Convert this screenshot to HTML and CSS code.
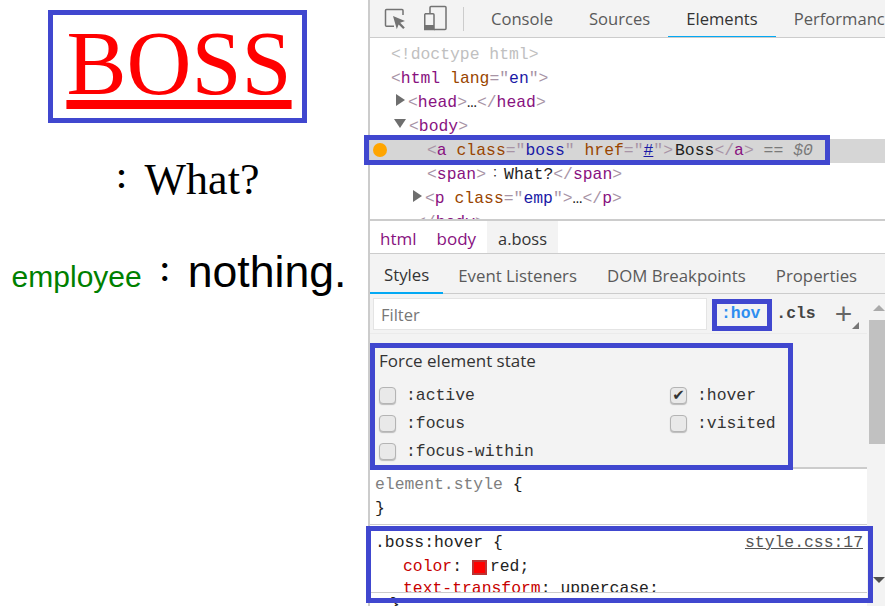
FILE: index.html
```html
<!DOCTYPE html>
<html lang="en">
<head>
<meta charset="utf-8">
<title>Boss</title>
<link rel="stylesheet" href="styles.css">
</head>
<body>
<div class="app">
  <main class="page">
    <a class="boss" href="#">BOSS</a>
    <span class="what"><span class="colon">：</span>What?</span>
    <p class="emp"><span class="emp-name">employee</span><span class="emp-text"><span class="colon">：</span>nothing.</span></p>
  </main>
  <section class="devtools">
    <header class="toolbar">
      <svg class="tool-icon inspect" width="24" height="24" viewBox="0 0 24 24"><path d="M11 20.200H3.500a1 1 0 0 1-1-1V4.500a1 1 0 0 1 1-1H19a1 1 0 0 1 1 1V9" fill="none" stroke="#737373" stroke-width="1.500"/><path d="M10 10l12 5-4.800 1.800 4.600 4.600-1.600 1.600-4.600-4.600-1.800 4.800z" fill="#737373"/></svg>
      <svg class="tool-icon device" width="24" height="26" viewBox="0 0 24 26"><path d="M7 8V2.500a1 1 0 0 1 1-1h14a1 1 0 0 1 1 1v21a1 1 0 0 1-1 1H11" fill="none" stroke="#737373" stroke-width="1.500"/><path d="M2 8.750h8a1 1 0 0 1 1 1v14.750H1.750V9.750a1 1 0 0 1 1-1z" fill="none" stroke="#737373" stroke-width="1.500"/><path d="M1 20h10v5H1z" fill="#737373"/></svg>
      <span class="tool-sep"></span>
      <span class="tab">Console</span>
      <span class="tab">Sources</span>
      <span class="tab active">Elements</span>
      <span class="tab">Performance</span>
    </header>
    <div class="tree">
      <div class="row ind1 doctype">&lt;!doctype html&gt;</div>
      <div class="row ind1"><i>&lt;</i><b>html</b> <u>lang</u><i>="</i><em>en</em><i>"&gt;</i></div>
      <div class="row ind2"><span class="tri right"></span><i>&lt;</i><b>head</b><i>&gt;</i><s>…</s><i>&lt;/</i><b>head</b><i>&gt;</i></div>
      <div class="row ind2"><span class="tri down"></span><i>&lt;</i><b>body</b><i>&gt;</i></div>
      <div class="row ind3 selected"><span class="dot"></span><i>&lt;</i><b>a</b> <u>class</u><i>="</i><em>boss</em><i>"</i> <u>href</u><i>="</i><em class="link">#</em><i>"&gt;</i><s class="boss-text">Boss</s><i>&lt;/</i><b>a</b><i>&gt;</i> <span class="eq">== <span class="var">$0</span></span></div>
      <div class="row ind3"><i>&lt;</i><b>span</b><i>&gt;</i><s class="cjk">：</s><s>What?</s><i>&lt;/</i><b>span</b><i>&gt;</i></div>
      <div class="row ind4"><span class="tri right"></span><i>&lt;</i><b>p</b> <u>class</u><i>="</i><em>emp</em><i>"&gt;</i><s>…</s><i>&lt;/</i><b>p</b><i>&gt;</i></div>
      <div class="row ind2b"><i>&lt;/</i><b>body</b><i>&gt;</i></div>
    </div>
    <nav class="crumbs">
      <span class="crumb">html</span>
      <span class="crumb">body</span>
      <span class="crumb current">a.boss</span>
    </nav>
    <nav class="subtabs">
      <span class="subtab active">Styles</span>
      <span class="subtab">Event Listeners</span>
      <span class="subtab">DOM Breakpoints</span>
      <span class="subtab">Properties</span>
    </nav>
    <div class="styles">
      <div class="styles-main">
        <div class="filterbar">
          <span class="filter">Filter</span>
          <span class="hov">:hov</span>
          <span class="cls">.cls</span>
          <span class="plus">+</span>
          <span class="corner"></span>
        </div>
        <div class="force">
          <div class="force-title">Force element state</div>
          <div class="force-grid">
            <label class="state"><span class="check"></span>:active</label>
            <label class="state"><span class="check on">✔</span>:hover</label>
            <label class="state"><span class="check"></span>:focus</label>
            <label class="state"><span class="check"></span>:visited</label>
            <label class="state"><span class="check"></span>:focus-within</label>
          </div>
        </div>
        <div class="rule first">
          <div class="css muted">element.style <span class="brace">{</span></div>
          <div class="css">}</div>
        </div>
        <div class="rule second">
          <div class="css selector"><span>.boss:hover {</span><span class="source">style.css:17</span></div>
          <div class="css prop"><span class="name">color</span>: <span class="swatch"></span>red;</div>
          <div class="css prop"><span class="name">text-transform</span>: uppercase;</div>
        </div>
        <div class="rule third"><div class="css">}</div></div>
      </div>
      <div class="scrollbar">
        <span class="arrow up"></span>
        <span class="thumb"></span>
        <span class="track"></span>
        <span class="arrow down"></span>
      </div>
    </div>
  </section>
</div>
<div class="mark mark-page"></div>
<div class="mark mark-row"></div>
<div class="mark mark-hov"></div>
<div class="mark mark-force"></div>
<div class="mark mark-rule"></div>
</body>
</html>
```
FILE: styles.css
```css
* { box-sizing: border-box; }
html, body { margin: 0; height: 100%; overflow: hidden; background: #fff; }
.app { display: flex; width: 885px; height: 606px; overflow: hidden; }

.page { width: 368px; flex: none; display: flex; flex-direction: column; align-items: center; padding-top: 14px; padding-right: 10px; }
.boss { font: 90px/100px "Liberation Serif", "Times New Roman", serif; color: #f00; text-decoration: underline; text-decoration-thickness: 9px; text-underline-offset: 6px; text-decoration-skip-ink: none; }
.what { margin-top: 38px; font: 44px/56px "Liberation Serif", serif; color: #000; }
.colon { display: inline-block; width: 46px; text-align: center; font-family: "Noto Sans CJK TC", sans-serif; font-size: 27px; font-weight: 700; line-height: 1; vertical-align: 5px; }
.emp { margin: 36px 0 0; white-space: nowrap; display: flex; align-items: baseline; }
.emp-name { font: 30px/40px "Liberation Sans", Arial, sans-serif; color: #008000; }
.emp-text { font: 44.6px/56px "Liberation Sans", sans-serif; color: #000; }

.devtools { flex: 1; min-width: 0; display: flex; flex-direction: column; border-left: 2px solid #ccc; font-family: "Open Sans", "Noto Sans", sans-serif; overflow: hidden; }

.toolbar { height: 38px; flex: none; display: flex; align-items: center; background: #f3f3f3; border-bottom: 1px solid #ccc; white-space: nowrap; overflow: hidden; }
.tool-icon { flex: none; align-self: flex-start; }
.tool-icon.inspect { margin: 6px 0 0 13px; }
.tool-icon.device { margin: 5px 0 0 16px; }
.tool-sep { width: 1px; height: 24px; background: #ccc; margin: 0 9px 0 16px; flex: none; }
.tab { height: 38px; padding: 0 18px; font-size: 16.6px; line-height: 38px; color: #5a5a5a; flex: none; }
.tab.active { color: #333; border-bottom: 2px solid #03a9f4; line-height: 38px; }

.tree { height: 181px; flex: none; overflow: hidden; font: 16.4px/24px "Liberation Mono", monospace; padding-top: 5px; background: #fff; }
.row { height: 24px; white-space: pre; color: #222; position: relative; line-height: 23px; }
.row i { font-style: normal; color: #a894a6; }
.row b { font-weight: normal; color: #881280; }
.row u { text-decoration: none; color: #994500; }
.row em { font-style: normal; color: #1a1aa6; }
.row s { text-decoration: none; color: #222; }
.row .link { color: #1a1aa6; text-decoration: underline; }
.row .boss-text { margin-left: 2px; }
.doctype { color: #c0c0c0; }
.ind1 { padding-left: 21px; }
.ind2 { padding-left: 26px; }
.ind2b { padding-left: 46px; }
.ind3 { padding-left: 57px; }
.ind4 { padding-left: 43px; }
.selected { background: #d6d6d6; }
.row .cjk { display: inline-block; width: 18px; text-align: center; font-family: "Noto Sans CJK TC", sans-serif; font-size: 11px; line-height: 1; vertical-align: 2px; }
.eq { color: #7a7a7a; }
.var { font-style: italic; }
.tri { display: inline-block; width: 0; height: 0; margin-right: 3px; }
.tri.right { border-left: 9px solid #6e6e6e; border-top: 6px solid transparent; border-bottom: 6px solid transparent; vertical-align: 1px; }
.tri.down { border-top: 9px solid #6e6e6e; border-left: 6px solid transparent; border-right: 6px solid transparent; margin-left: -2px; vertical-align: 3px; }
.dot { position: absolute; left: 3px; top: 4px; width: 14px; height: 14px; border-radius: 50%; background: #ffa500; }

.crumbs { height: 35px; flex: none; display: flex; border-top: 2px solid #ccc; border-bottom: 1px solid #ccc; background: #fff; font-size: 17px; }
.crumb { padding: 0 10px; line-height: 35px; color: #881280; }
.crumb.current { color: #333; background: #f3f3f3; padding: 0 11px; margin-left: 1px; font-size: 16.4px; }

.subtabs { height: 40px; flex: none; display: flex; background: #f3f3f3; border-bottom: 1px solid #ccc; font-size: 16.8px; white-space: nowrap; }
.subtab { padding: 0 15px; line-height: 43px; color: #5a5a5a; }
.subtab.active { color: #333; border-bottom: 2px solid #03a9f4; padding: 0 14px; margin-bottom: -1px; line-height: 42px; }

.styles { flex: 1; min-height: 0; display: flex; background: #fff; }
.styles-main { flex: 1; min-width: 0; display: flex; flex-direction: column; overflow: hidden; }
.filterbar { height: 40px; flex: none; display: flex; align-items: flex-start; background: #f3f3f3; position: relative; border-bottom: 1px solid #ebebeb; padding: 4px 0 0 3px; }
.filter { width: 334px; height: 32px; flex: none; background: #fff; border: 1px solid #e4e4e4; padding-left: 7px; font-size: 16.5px; line-height: 31px; color: #777; }
.hov { margin-left: 14px; font: bold 16.4px/32px "Liberation Mono", monospace; color: #2e8ef0; }
.cls { margin-left: 16px; font: bold 16.4px/32px "Liberation Mono", monospace; color: #444; }
.plus { margin-left: 19px; font: 30px/32px "Liberation Sans", sans-serif; color: #666; }
.corner { position: absolute; right: 8px; bottom: 4px; width: 0; height: 0; border-left: 7px solid transparent; border-bottom: 7px solid #777; }

.force { height: 135px; flex: none; padding: 16px 0 0 9px; background: #f3f3f3; border-bottom: 2px solid #ccc; font-size: 17px; }
.force-title { line-height: 22px; color: #333; }
.force-grid { display: grid; grid-template-columns: 291px 1fr; grid-auto-rows: 28px; margin-top: 9px; }
.state { display: flex; align-items: center; font: 16.4px "Liberation Mono", monospace; color: #333; white-space: nowrap; }
.check { width: 17px; height: 17px; flex: none; margin-right: 10px; background: #e9e9e9; border: 1px solid #b4b4b4; border-radius: 4px; box-shadow: 0 1px 1px #bbb; display: flex; align-items: center; justify-content: center; font: 15px/1 "DejaVu Sans", sans-serif; color: #333; }

.rule { flex: none; border-bottom: 1px solid #ccc; font: 16.4px/24px "Liberation Mono", monospace; color: #222; }
.rule.first { height: 56px; padding: 4px 0 0 5px; }
.muted { color: #808080; }
.brace { color: #222; }
.rule.second { height: 68px; padding: 6px 4px 0 5px; overflow: hidden; }
.selector { display: flex; justify-content: space-between; }
.source { color: #555; text-decoration: underline; }
.prop { padding-left: 28px; display: flex; align-items: center; white-space: pre; }
.prop + .prop { margin-top: -2px; }
.name { color: #c80000; }
.swatch { width: 15px; height: 15px; flex: none; background: #f00; border: 2px solid #b33; margin: 0 3px 0 0; }
.rule.third { border-bottom: 0; padding: 0 0 0 20px; }

.scrollbar { width: 18px; flex: none; display: flex; flex-direction: column; align-items: flex-end; background: #f3f3f3; }
.thumb { width: 16px; height: 124px; flex: none; background: #c1c1c1; margin-top: 9px; }
.track { flex: 1; }
.arrow { width: 0; height: 0; flex: none; border-left: 6px solid transparent; border-right: 6px solid transparent; }
.arrow.up { border-bottom: 6px solid #aaa; margin-top: 11px; }
.arrow.down { border-top: 6px solid #505050; margin-bottom: 23px; }

.mark { position: absolute; border: 5px solid #4047cf; pointer-events: none; }
.mark-page { left: 48px; top: 10px; width: 259px; height: 113px; }
.mark-row { left: 364px; top: 135px; width: 466px; height: 30px; }
.mark-hov { left: 712px; top: 299px; width: 60px; height: 32px; }
.mark-force { left: 370px; top: 343px; width: 423px; height: 127px; }
.mark-rule { left: 366px; top: 526px; width: 507px; height: 77px; }
```
